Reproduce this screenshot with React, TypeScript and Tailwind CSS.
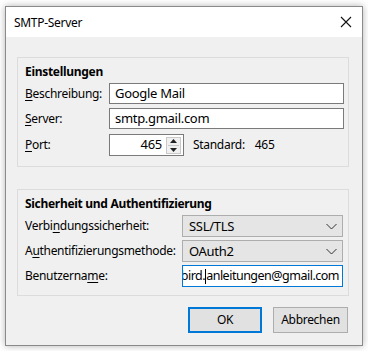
import React from "react";

const font = { fontFamily: '"Noto Sans", "Open Sans", sans-serif' };

function U({ children }: { children: React.ReactNode }) {
  return <span className="underline underline-offset-[2px] decoration-1">{children}</span>;
}

function Chevron() {
  return (
    <svg width="11" height="7" viewBox="0 0 11 7" className="mr-[5px]">
      <path d="M0.5 1 L5.5 6 L10.5 1" fill="none" stroke="#333" strokeWidth="1" />
    </svg>
  );
}

function Select({ value }: { value: string }) {
  return (
    <div className="h-[22px] w-[161px] bg-[#e5e5e5] border border-[#adadad] flex items-center justify-between">
      <span className="pl-[6px] text-[13px] text-black leading-none">{value}</span>
      <Chevron />
    </div>
  );
}

export default function App() {
  return (
    <div className="w-[368px] h-[351px] bg-white relative overflow-hidden tracking-[-0.3px]" style={font}>
      <div className="pt-[6px] pl-[5px]">
        <div className="w-[358px] h-[340px] border border-[#8a8a8a] bg-[#f0f0f0] flex flex-col shadow-[0_0_7px_rgba(0,0,0,0.3)]">
          {/* title bar */}
          <div className="h-[30px] bg-white flex items-center justify-between">
            <span className="pl-[8px] pt-[1px] text-[12px] text-black">SMTP-Server</span>
            <svg width="12" height="12" viewBox="0 0 12 12" className="mr-[10px]">
              <path d="M1 1 L11 11 M11 1 L1 11" stroke="#111" strokeWidth="1.1" />
            </svg>
          </div>

          {/* group 1 */}
          <div className="ml-[11px] mt-[20px] w-[332px] h-[110px] border border-[#dcdcdc] pt-[6px] pl-[7px] pr-[4px] flex flex-col text-[12px] text-black">
            <div className="font-bold leading-[16px] h-[16px]">Einstellungen</div>
            <div className="mt-[3px] flex items-center h-[21px]">
              <span className="w-[84px]"><U>B</U>eschreibung:</span>
              <div className="h-[21px] w-[235px] bg-white border border-[#7a7a7a] flex items-center pl-[5px] text-[13px]">Google Mail</div>
            </div>
            <div className="mt-[4px] flex items-center h-[21px]">
              <span className="w-[84px]"><U>S</U>erver:</span>
              <div className="h-[21px] w-[235px] bg-white border border-[#7a7a7a] flex items-center pl-[5px] text-[13px]">smtp.gmail.com</div>
            </div>
            <div className="mt-[5px] flex items-center h-[22px]">
              <span className="w-[84px]"><U>P</U>ort:</span>
              <div className="h-[22px] w-[75px] bg-white border border-[#7a7a7a] flex items-center justify-end pr-[2px] text-[13px]">
                <span className="mr-[4px]">465</span>
                <div className="w-[15px] h-[17px] border border-[#c8c8c8] bg-[#f0f0f0] flex flex-col items-center justify-around">
                  <svg width="7" height="4" viewBox="0 0 7 4"><path d="M3.5 0 L7 4 L0 4 Z" fill="#222" /></svg>
                  <div className="w-[11px] h-px bg-[#c8c8c8]" />
                  <svg width="7" height="4" viewBox="0 0 7 4"><path d="M0 0 L7 0 L3.5 4 Z" fill="#222" /></svg>
                </div>
              </div>
              <span className="ml-[9px]">Standard:</span>
              <span className="ml-[10px]">465</span>
            </div>
          </div>

          {/* group 2 */}
          <div className="ml-[11px] mt-[22px] w-[332px] h-[107px] border border-[#dcdcdc] pt-[6px] pl-[7px] pr-[4px] flex flex-col text-[12px] text-black">
            <div className="font-bold leading-[16px] h-[16px]">Sicherheit und Authentifizierung</div>
            <div className="mt-[3px] flex items-center">
              <span className="w-[157px]">Verbi<U>n</U>dungssicherheit:</span>
              <Select value="SSL/TLS" />
            </div>
            <div className="mt-[3px] flex items-center">
              <span className="w-[157px]">A<U>u</U>thentifizierungsmethode:</span>
              <Select value="OAuth2" />
            </div>
            <div className="mt-[3px] flex items-center">
              <span className="w-[157px]">Benutzerna<U>m</U>e:</span>
              <div className="h-[22px] w-[161px] bg-white border border-[#0078d7] flex items-center justify-end overflow-hidden pr-[3px] text-[12.5px] tracking-[-0.5px]">
                <span className="whitespace-nowrap flex items-center">
                  thunderbird.
                  <span className="inline-block w-px h-[15px] bg-black" />
                  anleitungen@gmail.com
                </span>
              </div>
            </div>
          </div>

          {/* buttons */}
          <div className="mt-[11px] flex justify-end pr-[14px] gap-[11px] text-[12px] text-black">
            <div className="w-[74px] h-[26px] bg-[#e1e1e1] border-2 border-[#0078d7] flex items-center justify-center">OK</div>
            <div className="w-[75px] h-[26px] bg-[#e1e1e1] border border-[#adadad] flex items-center justify-center">Abbrechen</div>
          </div>
        </div>
      </div>
    </div>
  );
}
